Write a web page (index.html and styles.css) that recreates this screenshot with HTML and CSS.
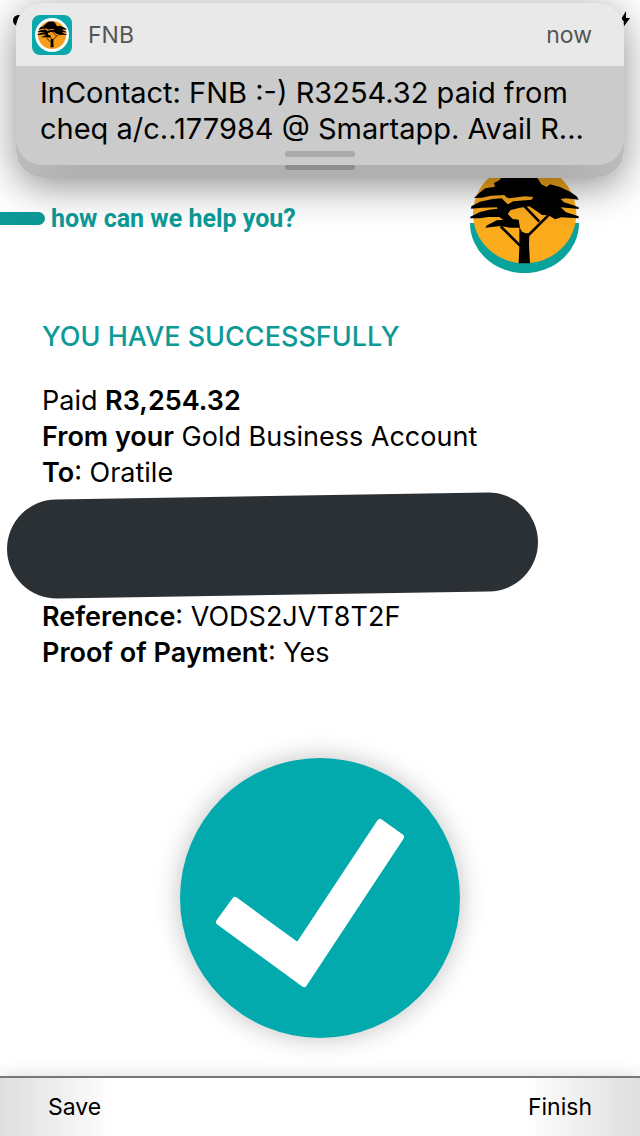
FILE: index.html
```
<!DOCTYPE html>
<html lang="en">
  <head>
    <meta charset="UTF-8" />
    <meta name="viewport" content="width=device-width, initial-scale=1.0" />
    <title>FNB - Payment Successful</title>
    <link rel="stylesheet" href="styles.css">
  </head>
  <body>
    <!-- shared tree drawing, used by the logo and the app icon -->
    <svg class="symbols" aria-hidden="true">
      <symbol id="tree" viewBox="27 -3 330 327">
        <path d="M42 99 L60 82 L76 70 L105 65 L102 54 L118 46 L130 30 L150 16 L200 12 L226 26 L234 42 L244 58 L260 66 L270 58 L300 66 L330 80 L350 94 L356 104 L318 100 L302 102 L312 112 L336 119 L356 127 L356 132 L302 127 L318 142 L356 154 L356 160 L304 157 L285 163 L266 151 L246 150 L226 136 L208 124 L180 128 L152 135 L143 147 L158 162 L176 164 L180 188 L150 188 L122 183 L77 188 L79 182 L110 166 L130 164 L118 156 L84 156 L60 160 L31 160 L31 155 L60 141 L88 134 L113 131 L110 127 L66 128 L33 131 L34 124 L60 110 L98 102 L125 100 L143 118 L160 109 L215 104 L220 96 L195 94 L148 100 L139 97 L133 90 L92 92 L66 98 Z" />
        <path d="M178 186 L186 200 L197 205 L208 204 L207 240 L210 295 L176 295 L178 245 Z" />
        <path class="branch" d="M122 184 L180 242 M204 212 L268 148 M194 124 L238 170" />
      </symbol>
    </svg>

    <div class="status-bar">
      <span class="signal-dot"></span>
      <svg class="bolt" viewBox="0 0 10 18" aria-hidden="true">
        <path d="M6 0 L0 10 H4 L2 18 L10 7 H6 Z" />
      </svg>
    </div>

    <div class="notification">
      <div class="notification-card">
        <div class="notification-top">
          <svg class="app-icon" viewBox="0 0 40 40" role="img" aria-label="FNB">
            <rect width="40" height="40" rx="8" fill="#0aa8aa" />
            <circle cx="20" cy="20" r="17" fill="#fff" />
            <circle cx="20" cy="20" r="14" fill="#f59c1a" />
            <use href="#tree" x="5" y="5" width="30" height="30" />
          </svg>
          <span class="app-name">FNB</span>
          <span class="time">now</span>
        </div>
        <div class="notification-body">
          InContact: FNB :-) R3254.32 paid from<br />
          cheq a/c..177984 @ Smartapp. Avail R...
        </div>
        <span class="grabber"></span>
      </div>
    </div>

    <div class="header">
      <span class="header-bar"></span>
      <span class="slogan">how can we help you?</span>
      <svg class="logo" viewBox="27 -3 330 327" role="img" aria-label="FNB">
        <path d="M30 174 A163 150 0 0 0 357 174 Z" fill="#0aa39c" />
        <ellipse cx="194" cy="146" rx="155" ry="149" fill="#fcab1c" />
        <use href="#tree" x="27" y="-3" width="330" height="327" />
      </svg>
    </div>

    <div class="content">
      <h1>YOU HAVE SUCCESSFULLY</h1>

      <div class="details">
        <p>Paid <b>R3,254.32</b></p>
        <p><b>From your</b> Gold Business Account</p>
        <p><b>To</b>: Oratile</p>
        <div class="hidden-rows"></div>
        <p><b>Reference</b>: VODS2JVT8T2F</p>
        <p><b>Proof of Payment</b>: Yes</p>
      </div>

      <div class="success">
        <svg viewBox="0 0 280 280" role="img" aria-label="Successful">
          <path d="M55 142 L118 188 L200 64 L221 79 L124 226 L39 164 Z" />
        </svg>
      </div>
    </div>

    <div class="footer">
      <button type="button">Save</button>
      <button type="button">Finish</button>
    </div>
  </body>
</html>
```
FILE: styles.css
```
body {
  font-family: Inter, "Liberation Sans", sans-serif;
  background-color: #ffffff;
  color: #000;
  display: flex;
  flex-direction: column;
  min-height: 100vh;
  margin: 0;
  position: relative;
  overflow-x: hidden;
}

.symbols {
  position: absolute;
  width: 0;
  height: 0;
}

.branch {
  fill: none;
  stroke: #000;
  stroke-width: 8px;
}

.status-bar {
  display: flex;
  justify-content: space-between;
  align-items: center;
  height: 40px;
  padding: 0 10px 0 13px;
}

.signal-dot {
  width: 11px;
  height: 11px;
  border-radius: 50%;
  background-color: #000;
}

.bolt {
  width: 10px;
  height: 18px;
}

/* notification banner over the page */
.notification {
  position: absolute;
  top: 3px;
  left: 16px;
  right: 16px;
  padding-bottom: 13px;
  border-radius: 28px;
  background: linear-gradient(to right, #bcbcbc, #b0b0b0 10%, #b0b0b0 90%, #bcbcbc);
  box-shadow: 0 8px 40px rgba(0, 0, 0, 0.45);
}

.notification::after {
  content: "";
  position: absolute;
  bottom: 8px;
  left: 50%;
  width: 70px;
  height: 6px;
  margin-left: -35px;
  border-radius: 3px;
  background-color: #8e8e8e;
}

.notification-card {
  position: relative;
  z-index: 1;
  border-radius: 26px;
  background-color: #cbcbcb;
  overflow: hidden;
}

.notification-top {
  display: flex;
  align-items: center;
  height: 63px;
  padding: 0 32px 0 16px;
  background-color: #e9e9e9;
  color: #555;
  font-size: 23px;
}

.app-icon {
  width: 40px;
  height: 40px;
  margin-right: 16px;
}

.time {
  margin-left: auto;
}

.notification-body {
  padding: 9px 24px 18px;
  font-size: 29px;
  line-height: 36px;
  white-space: nowrap;
}

.grabber {
  position: absolute;
  bottom: 8px;
  left: 50%;
  width: 70px;
  height: 6px;
  margin-left: -35px;
  border-radius: 3px;
  background-color: #aaa;
}

.header {
  display: flex;
  align-items: center;
  padding: 124px 61px 0 0;
}

.header-bar {
  width: 45px;
  height: 13px;
  margin-right: 6px;
  border-radius: 0 7px 7px 0;
  background-color: #0d9a97;
}

.slogan {
  color: #0d9a97;
  font-family: Roboto, sans-serif;
  font-size: 25px;
  font-weight: bold;
}

.logo {
  width: 110px;
  height: 109px;
  margin-left: auto;
}

.content {
  padding: 46px 42px 38px;
}

h1 {
  margin: 0 0 28px;
  color: #0d9a97;
  font-size: 27px;
  font-weight: 500;
  line-height: 36px;
}

.details p {
  margin: 0;
  font-size: 27px;
  line-height: 36px;
}

.details b {
  font-weight: 600;
}

.hidden-rows {
  height: 99px;
  max-width: 531px;
  margin: 5px 25px 4px -35px;
  border-radius: 50px;
  background-color: #2b3034;
  transform: rotate(-0.9deg);
}

.success {
  width: 280px;
  height: 280px;
  margin: 87px auto 0;
  border-radius: 50%;
  background-color: #02aaae;
  box-shadow: 0 0 26px rgba(0, 0, 0, 0.25);
}

.success path {
  fill: #fff;
  stroke: #fff;
  stroke-width: 6px;
  stroke-linejoin: round;
}

.footer {
  display: flex;
  justify-content: space-between;
  align-items: center;
  height: 58px;
  margin-top: auto;
  padding: 0 48px;
  border-top: 2px solid #777;
  background: linear-gradient(to right, #dedede, #fff 18%, #fff 82%, #dedede);
  box-shadow: 0 0 16px rgba(0, 0, 0, 0.15);
}

.footer button {
  padding: 0;
  border: none;
  background: none;
  color: #000;
  font-family: inherit;
  font-size: 23px;
  cursor: pointer;
}
```
